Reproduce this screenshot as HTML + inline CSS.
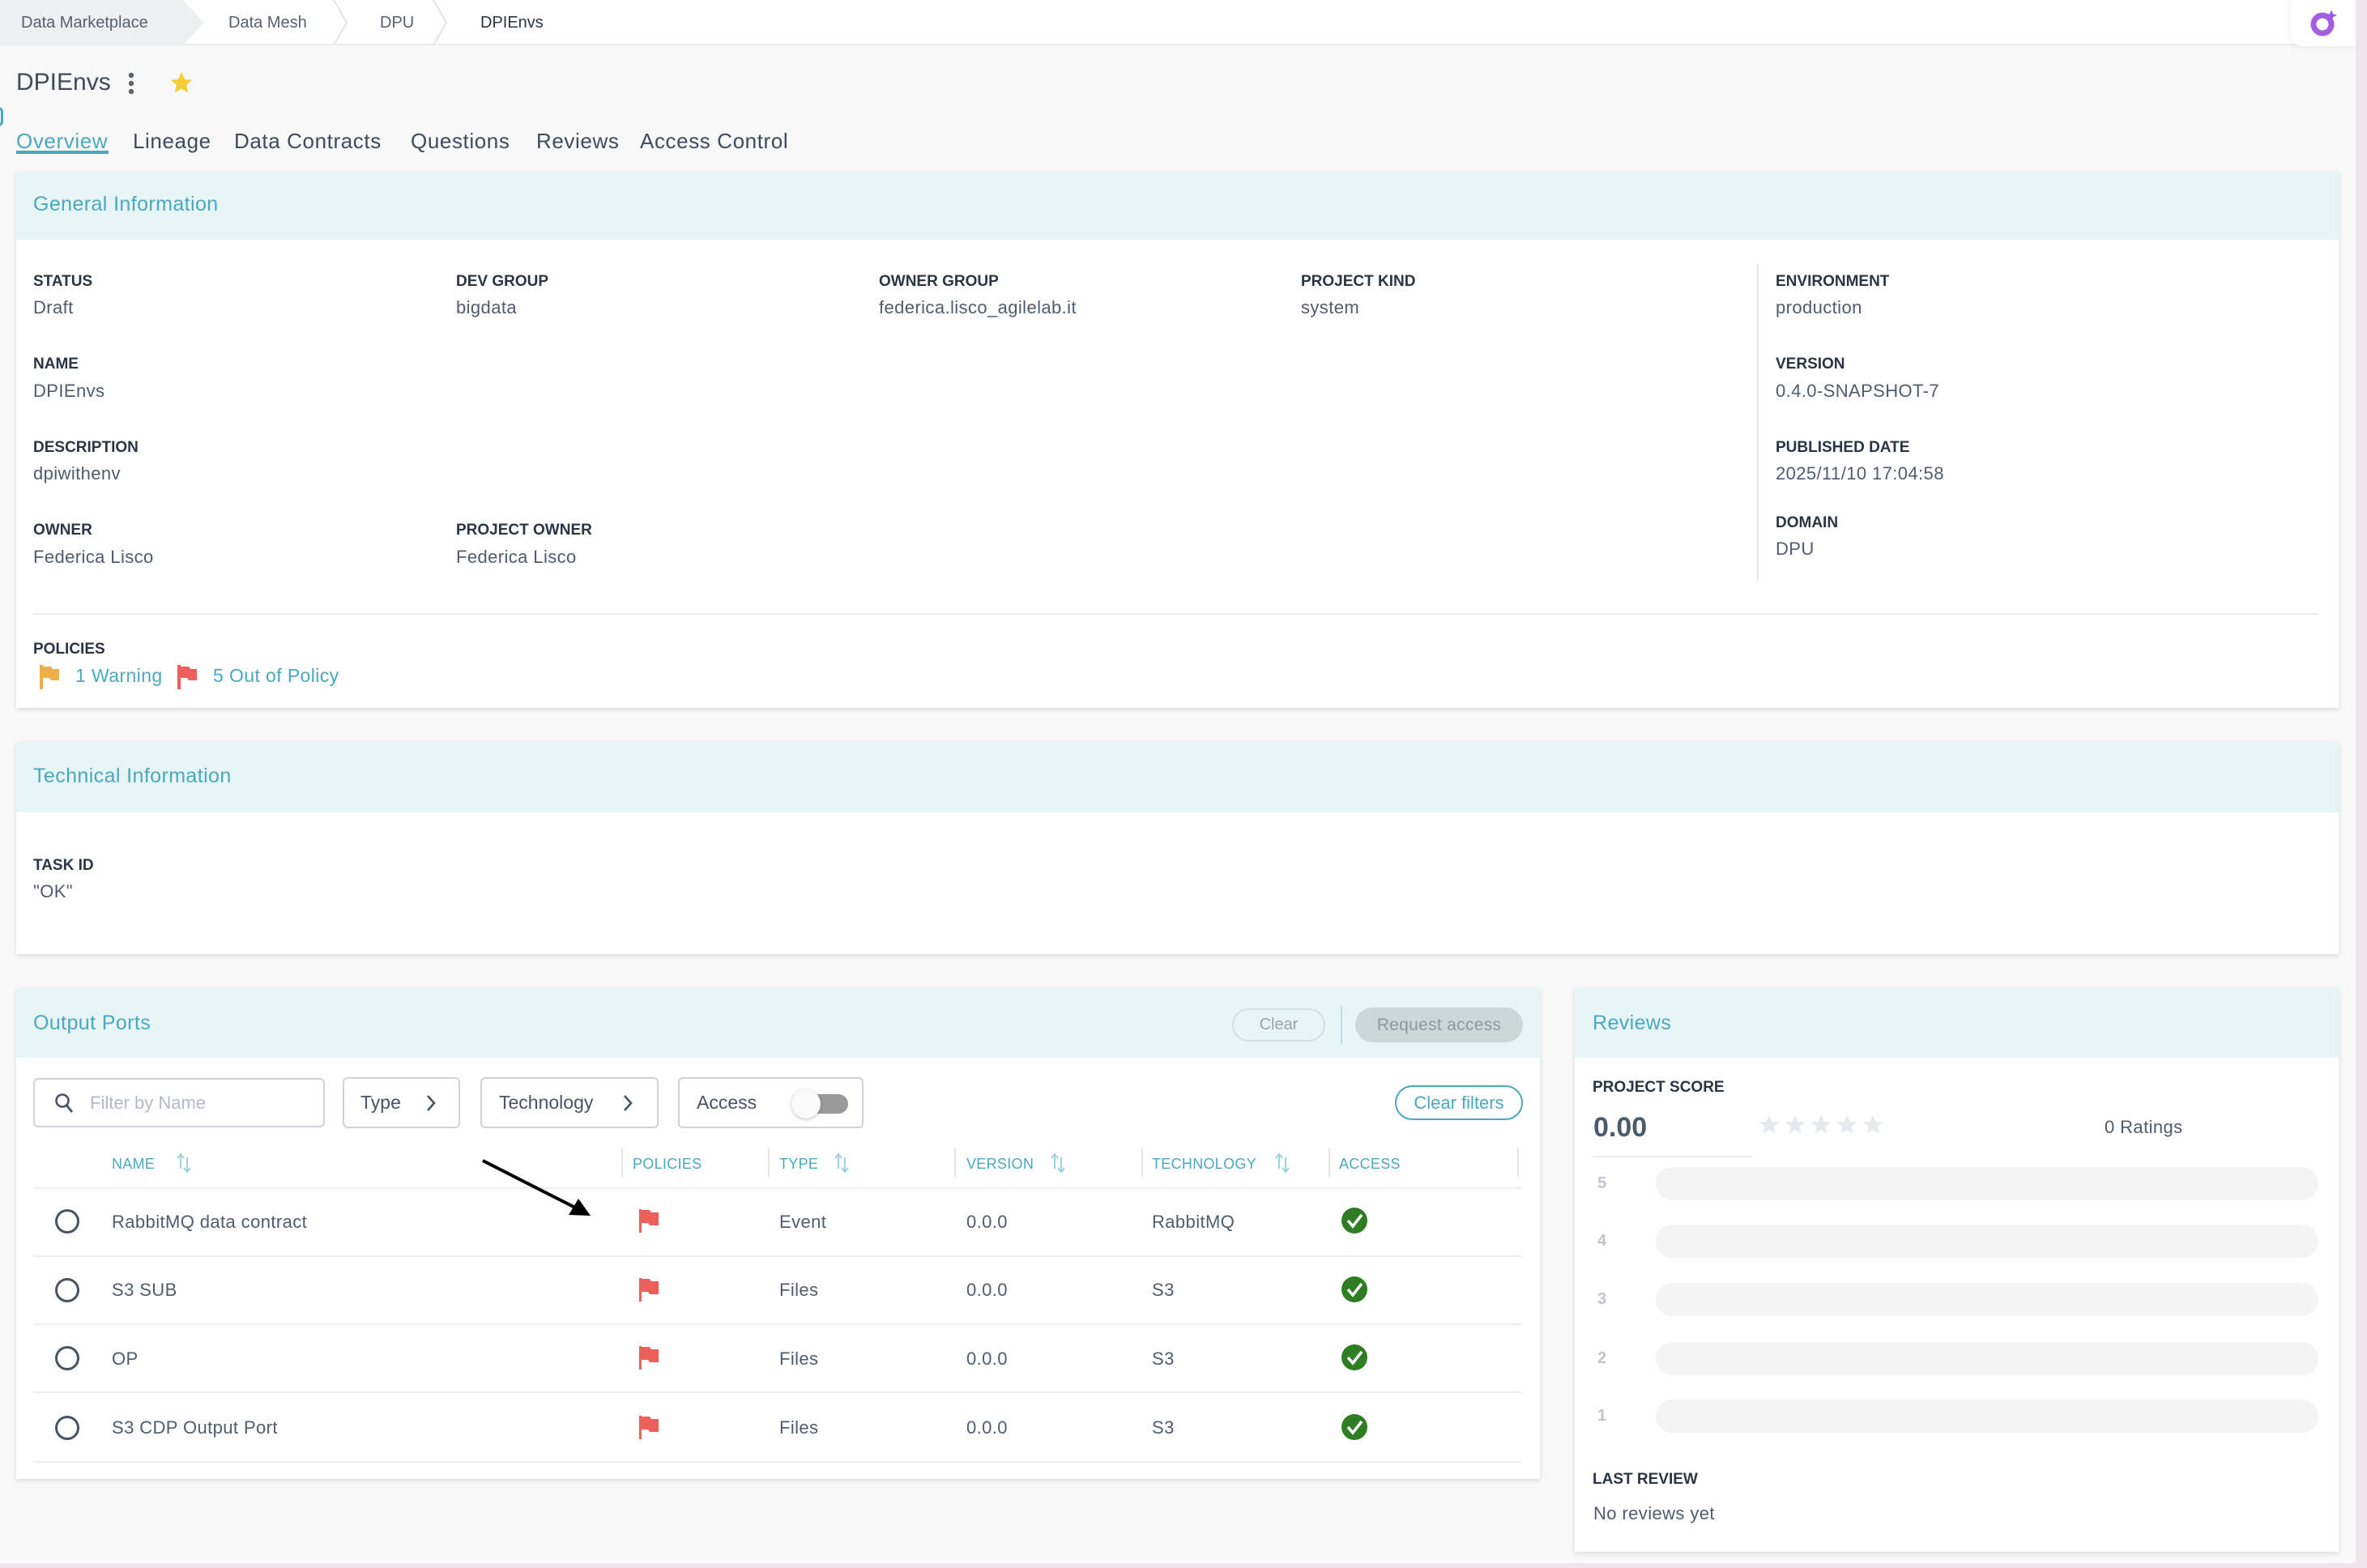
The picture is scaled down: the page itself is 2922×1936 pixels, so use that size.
<!DOCTYPE html>
<html><head><meta charset="utf-8"><style>
*{box-sizing:border-box;margin:0;padding:0}
body{width:2922px;height:1936px;background:#f8f8f8;font-family:"Liberation Sans",sans-serif;position:relative;overflow:hidden;color:#505c6e}
.a{position:absolute;white-space:nowrap;line-height:1}
.card{position:absolute;background:#fff;box-shadow:0 2px 6px rgba(0,0,0,.12)}
.hd{position:absolute;left:0;top:0;right:0;background:#e8f5f7}
.ht{color:#4aa8c0;font-size:25px;letter-spacing:.4px}
.lb{font-size:19px;font-weight:bold;color:#2b3442}
.v{font-size:22px;color:#505c6e;letter-spacing:.4px}
.th{font-size:18px;color:#4aa8c0;letter-spacing:.3px}
.td{font-size:22px;color:#505c6e;letter-spacing:.4px}
.vd{position:absolute;width:2px;background:#e6e6e6}
.hl{position:absolute;height:2px;background:#ededed}
.box{position:absolute;border:2px solid #cfd3d8;border-radius:6px;background:#fff}
.bar{position:absolute;left:100px;width:818px;height:41px;border-radius:21px;background:#f4f4f4}
.num{position:absolute;left:28px;font-size:20px;font-weight:bold;color:#bfc5ce;line-height:1}
.tab{font-size:26px;color:#3f4a5a;letter-spacing:.6px}
</style></head><body>

<div style="position:absolute;left:0;top:0;width:2922px;height:56px;background:#fff;border-bottom:2px solid #ececec"></div>
<svg style="position:absolute;left:0;top:0" width="620" height="56">
<polygon points="0,0 226,0 252,28 226,56 0,56" fill="#eeeff0"/>
<polyline points="412,0 428,28 412,56" fill="none" stroke="#e4e4e4" stroke-width="2"/>
<polyline points="535,0 551,28 535,56" fill="none" stroke="#e4e4e4" stroke-width="2"/>
</svg>
<div class="a" style="left:26px;top:18px;font-size:20px;color:#56606e">Data Marketplace</div>
<div class="a" style="left:282px;top:18px;font-size:20px;color:#56606e">Data Mesh</div>
<div class="a" style="left:469px;top:18px;font-size:20px;color:#56606e">DPU</div>
<div class="a" style="left:593px;top:18px;font-size:20px;color:#2b3442">DPIEnvs</div>
<div style="position:absolute;left:2828px;top:0;width:80px;height:57px;background:#fff;border-bottom-left-radius:14px;box-shadow:-2px 2px 8px rgba(0,0,0,.05)"></div>
<svg style="position:absolute;left:2848px;top:8px" width="40" height="40"><circle cx="19" cy="22" r="11" fill="none" stroke="#a35fe0" stroke-width="7"/><path d="M30 4 L32 9 L37 11 L32 13 L30 18 L28 13 L23 11 L28 9Z" fill="#9a5ae6"/></svg>
<div style="position:absolute;left:2908px;top:0;width:14px;height:1936px;background:#efe4e9"></div>
<div style="position:absolute;left:0;top:1930px;width:2922px;height:6px;background:#efe4e9"></div>
<div style="position:absolute;left:-8px;top:132px;width:12px;height:24px;border-radius:6px;border:3px solid #4aa8c0"></div>

<div class="a" style="left:20px;top:87px;font-size:30px;color:#3f4a5a">DPIEnvs</div>
<svg style="position:absolute;left:156px;top:88px" width="12" height="30"><circle cx="6" cy="5" r="3.2" fill="#5c6470"/><circle cx="6" cy="15" r="3.2" fill="#5c6470"/><circle cx="6" cy="25" r="3.2" fill="#5c6470"/></svg>
<svg style="position:absolute;left:208px;top:86px" width="32" height="32" viewBox="0 0 24 24"><path d="M12 2l2.9 6.9 7.1.6-5.4 4.7 1.7 7.3L12 17.6 5.7 21.5l1.7-7.3L2 9.5l7.1-.6z" fill="#f5cf3a"/></svg>

<div class="a tab" style="left:20px;top:161px;color:#4aa8c0">Overview</div>
<div style="position:absolute;left:20px;top:186px;width:114px;height:4px;background:#4aa8c0"></div>
<div class="a tab" style="left:164px;top:161px">Lineage</div>
<div class="a tab" style="left:289px;top:161px">Data Contracts</div>
<div class="a tab" style="left:507px;top:161px">Questions</div>
<div class="a tab" style="left:662px;top:161px">Reviews</div>
<div class="a tab" style="left:790px;top:161px">Access Control</div>

<div class="card" style="left:20px;top:212px;width:2867px;height:662px">
<div class="hd" style="height:84px"></div>
<div class="a ht" style="left:21px;top:28px">General Information</div>
<div class="a lb" style="left:21px;top:126px">STATUS</div><div class="a v" style="left:21px;top:157px">Draft</div>
<div class="a lb" style="left:543px;top:126px">DEV GROUP</div><div class="a v" style="left:543px;top:157px">bigdata</div>
<div class="a lb" style="left:1065px;top:126px">OWNER GROUP</div><div class="a v" style="left:1065px;top:157px">federica.lisco_agilelab.it</div>
<div class="a lb" style="left:1586px;top:126px">PROJECT KIND</div><div class="a v" style="left:1586px;top:157px">system</div>
<div class="a lb" style="left:21px;top:228px">NAME</div><div class="a v" style="left:21px;top:260px">DPIEnvs</div>
<div class="a lb" style="left:21px;top:331px">DESCRIPTION</div><div class="a v" style="left:21px;top:362px">dpiwithenv</div>
<div class="a lb" style="left:21px;top:433px">OWNER</div><div class="a v" style="left:21px;top:465px">Federica Lisco</div>
<div class="a lb" style="left:543px;top:433px">PROJECT OWNER</div><div class="a v" style="left:543px;top:465px">Federica Lisco</div>
<div class="vd" style="left:2149px;top:114px;height:391px"></div>
<div class="a lb" style="left:2172px;top:126px">ENVIRONMENT</div><div class="a v" style="left:2172px;top:157px">production</div>
<div class="a lb" style="left:2172px;top:228px">VERSION</div><div class="a v" style="left:2172px;top:260px">0.4.0-SNAPSHOT-7</div>
<div class="a lb" style="left:2172px;top:331px">PUBLISHED DATE</div><div class="a v" style="left:2172px;top:362px">2025/11/10 17:04:58</div>
<div class="a lb" style="left:2172px;top:424px">DOMAIN</div><div class="a v" style="left:2172px;top:455px">DPU</div>
<div class="hl" style="left:21px;top:545px;width:2821px"></div>
<div class="a lb" style="left:21px;top:580px">POLICIES</div>
<svg style="position:absolute;left:29px;top:609px" width="26" height="30"><rect x="0" y="0" width="4" height="30" fill="#eeae48"/><path d="M4 2h10l2 3h8v14h-10l-2-3H4z" fill="#eeae48"/></svg>
<div class="a" style="left:73px;top:611px;font-size:23px;color:#4aa8c0;letter-spacing:.4px">1 Warning</div>
<svg style="position:absolute;left:199px;top:609px" width="26" height="30"><rect x="0" y="0" width="4" height="30" fill="#ec5f5a"/><path d="M4 2h10l2 3h8v14h-10l-2-3H4z" fill="#ec5f5a"/></svg>
<div class="a" style="left:243px;top:611px;font-size:23px;color:#4aa8c0;letter-spacing:.4px">5 Out of Policy</div>
</div>

<div class="card" style="left:20px;top:917px;width:2867px;height:261px">
<div class="hd" style="height:86px"></div>
<div class="a ht" style="left:21px;top:29px">Technical Information</div>
<div class="a lb" style="left:21px;top:142px">TASK ID</div>
<div class="a v" style="left:21px;top:173px">"OK"</div>
</div>

<div class="card" style="left:20px;top:1221px;width:1881px;height:605px">
<div class="hd" style="height:85px"></div>
<div class="a ht" style="left:21px;top:30px">Output Ports</div>
<div style="position:absolute;left:1501px;top:24px;width:115px;height:41px;border:2px solid #cfe0e3;border-radius:21px;font-size:20px;color:#9aa4aa;text-align:center;line-height:37px">Clear</div>
<div style="position:absolute;left:1635px;top:20px;width:2px;height:48px;background:#bfe0e7"></div>
<div style="position:absolute;left:1653px;top:23px;width:207px;height:43px;border-radius:22px;background:#ccd7d8;font-size:21px;color:#8f999c;text-align:center;line-height:43px;letter-spacing:.3px">Request access</div>

<div class="box" style="left:21px;top:110px;width:360px;height:61px"></div>
<svg style="position:absolute;left:47px;top:128px" width="26" height="28"><circle cx="10" cy="10" r="7.5" fill="none" stroke="#4a5363" stroke-width="2.6"/><path d="M15.5 16 L22 24" stroke="#4a5363" stroke-width="2.8"/></svg>
<div class="a" style="left:91px;top:130px;font-size:22px;color:#b3b9c2">Filter by Name</div>
<div class="box" style="left:403px;top:109px;width:145px;height:63px"></div>
<div class="a" style="left:425px;top:129px;font-size:23px;color:#4a5363">Type</div>
<svg style="position:absolute;left:505px;top:130px" width="14" height="22"><path d="M3 2 L11 11 L3 20" fill="none" stroke="#4a5363" stroke-width="2.6"/></svg>
<div class="box" style="left:573px;top:109px;width:220px;height:63px"></div>
<div class="a" style="left:596px;top:129px;font-size:23px;color:#4a5363">Technology</div>
<svg style="position:absolute;left:748px;top:130px" width="14" height="22"><path d="M3 2 L11 11 L3 20" fill="none" stroke="#4a5363" stroke-width="2.6"/></svg>
<div class="box" style="left:817px;top:109px;width:229px;height:63px"></div>
<div class="a" style="left:840px;top:129px;font-size:23px;color:#4a5363">Access</div>
<div style="position:absolute;left:973px;top:130px;width:54px;height:24px;border-radius:12px;background:#9b9b9b"></div>
<div style="position:absolute;left:957px;top:124px;width:36px;height:36px;border-radius:18px;background:#fafafa;box-shadow:0 1px 4px rgba(0,0,0,.25)"></div>
<div style="position:absolute;left:1702px;top:119px;width:158px;height:43px;border:2px solid #4aa8c0;border-radius:22px;font-size:22px;color:#4aa8c0;text-align:center;line-height:39px">Clear filters</div>

<div class="a th" style="left:118px;top:207px">NAME</div>
<svg style="position:absolute;left:197px;top:202px" width="22" height="26"><path d="M6 20V3M2 7l4-5 4 5M14 6v17M10 19l4 5 4-5" fill="none" stroke="#9fd2df" stroke-width="2"/></svg>
<div class="vd" style="left:747px;top:196px;height:36px"></div>
<div class="a th" style="left:761px;top:207px">POLICIES</div>
<div class="vd" style="left:928px;top:196px;height:36px"></div>
<div class="a th" style="left:942px;top:207px">TYPE</div>
<svg style="position:absolute;left:1009px;top:202px" width="22" height="26"><path d="M6 20V3M2 7l4-5 4 5M14 6v17M10 19l4 5 4-5" fill="none" stroke="#9fd2df" stroke-width="2"/></svg>
<div class="vd" style="left:1158px;top:196px;height:36px"></div>
<div class="a th" style="left:1173px;top:207px">VERSION</div>
<svg style="position:absolute;left:1276px;top:202px" width="22" height="26"><path d="M6 20V3M2 7l4-5 4 5M14 6v17M10 19l4 5 4-5" fill="none" stroke="#9fd2df" stroke-width="2"/></svg>
<div class="vd" style="left:1389px;top:196px;height:36px"></div>
<div class="a th" style="left:1402px;top:207px">TECHNOLOGY</div>
<svg style="position:absolute;left:1553px;top:202px" width="22" height="26"><path d="M6 20V3M2 7l4-5 4 5M14 6v17M10 19l4 5 4-5" fill="none" stroke="#9fd2df" stroke-width="2"/></svg>
<div class="vd" style="left:1620px;top:196px;height:36px"></div>
<div class="a th" style="left:1633px;top:207px">ACCESS</div>
<div class="vd" style="left:1853px;top:196px;height:36px"></div>
<div class="hl" style="left:21px;top:245px;width:1837px"></div>
<div class="hl" style="left:21px;top:329px;width:1837px"></div>
<div class="hl" style="left:21px;top:413px;width:1837px"></div>
<div class="hl" style="left:21px;top:497px;width:1837px"></div>
<div class="hl" style="left:21px;top:583px;width:1837px"></div>
</div>

<svg style="position:absolute;left:0;top:0;pointer-events:none" width="2000" height="1936">
<defs>
<g id="rad"><circle r="13.5" fill="none" stroke="#4a5363" stroke-width="3"/></g>
<g id="flg"><rect x="-13" y="-14" width="3" height="29" fill="#ec5f5a"/><path d="M-10 -13h10l2 3h9v16h-11l-2-3h-8z" fill="#ec5f5a"/></g>
<g id="chk"><circle r="16" fill="#2f7d22"/><path d="M-8 0 L-2 7 L9 -7" fill="none" stroke="#fff" stroke-width="3.5"/></g>
</defs>
<use href="#rad" x="83" y="1508"/><use href="#rad" x="83" y="1593"/><use href="#rad" x="83" y="1677"/><use href="#rad" x="83" y="1763"/>
<use href="#flg" x="802" y="1507"/><use href="#flg" x="802" y="1592"/><use href="#flg" x="802" y="1676"/><use href="#flg" x="802" y="1762"/>
<use href="#chk" x="1672" y="1507"/><use href="#chk" x="1672" y="1592"/><use href="#chk" x="1672" y="1676"/><use href="#chk" x="1672" y="1762"/>
<path d="M596 1433 L712 1492" stroke="#000" stroke-width="4"/>
<polygon points="729,1501 702,1500 714,1480" fill="#000"/>
</svg>
<div class="a td" style="left:138px;top:1498px">RabbitMQ data contract</div>
<div class="a td" style="left:962px;top:1498px">Event</div>
<div class="a td" style="left:1193px;top:1498px">0.0.0</div>
<div class="a td" style="left:1422px;top:1498px">RabbitMQ</div>
<div class="a td" style="left:138px;top:1582px">S3 SUB</div>
<div class="a td" style="left:962px;top:1582px">Files</div>
<div class="a td" style="left:1193px;top:1582px">0.0.0</div>
<div class="a td" style="left:1422px;top:1582px">S3</div>
<div class="a td" style="left:138px;top:1667px">OP</div>
<div class="a td" style="left:962px;top:1667px">Files</div>
<div class="a td" style="left:1193px;top:1667px">0.0.0</div>
<div class="a td" style="left:1422px;top:1667px">S3</div>
<div class="a td" style="left:138px;top:1752px">S3 CDP Output Port</div>
<div class="a td" style="left:962px;top:1752px">Files</div>
<div class="a td" style="left:1193px;top:1752px">0.0.0</div>
<div class="a td" style="left:1422px;top:1752px">S3</div>

<div class="card" style="left:1944px;top:1221px;width:943px;height:695px">
<div class="hd" style="height:85px"></div>
<div class="a ht" style="left:22px;top:30px">Reviews</div>
<div class="a lb" style="left:22px;top:112px">PROJECT SCORE</div>
<div class="a" style="left:23px;top:154px;font-size:34px;font-weight:bold;color:#4c5a6e">0.00</div>
<div class="hl" style="left:22px;top:206px;width:197px"></div>
<svg style="position:absolute;left:226px;top:154px" width="160" height="30" viewBox="0 0 160 30">
<g fill="#e6e9ee"><path id="s" d="M14 2l3.4 8 8.6.6-6.6 5.6 2.1 8.4L14 20l-7.5 4.6 2.1-8.4L2 10.6l8.6-.6z"/>
<use href="#s" x="32"/><use href="#s" x="64"/><use href="#s" x="96"/><use href="#s" x="128"/></g></svg>
<div class="a" style="left:654px;top:160px;font-size:22px;color:#505c6e;letter-spacing:.4px">0 Ratings</div>
<div class="num" style="top:230px">5</div><div class="bar" style="top:220px"></div>
<div class="num" style="top:301px">4</div><div class="bar" style="top:291px"></div>
<div class="num" style="top:373px">3</div><div class="bar" style="top:363px"></div>
<div class="num" style="top:446px">2</div><div class="bar" style="top:436px"></div>
<div class="num" style="top:517px">1</div><div class="bar" style="top:507px"></div>
<div class="a lb" style="left:22px;top:596px">LAST REVIEW</div>
<div class="a" style="left:23px;top:637px;font-size:22px;color:#505c6e;letter-spacing:.4px">No reviews yet</div>
</div>
</body></html>
